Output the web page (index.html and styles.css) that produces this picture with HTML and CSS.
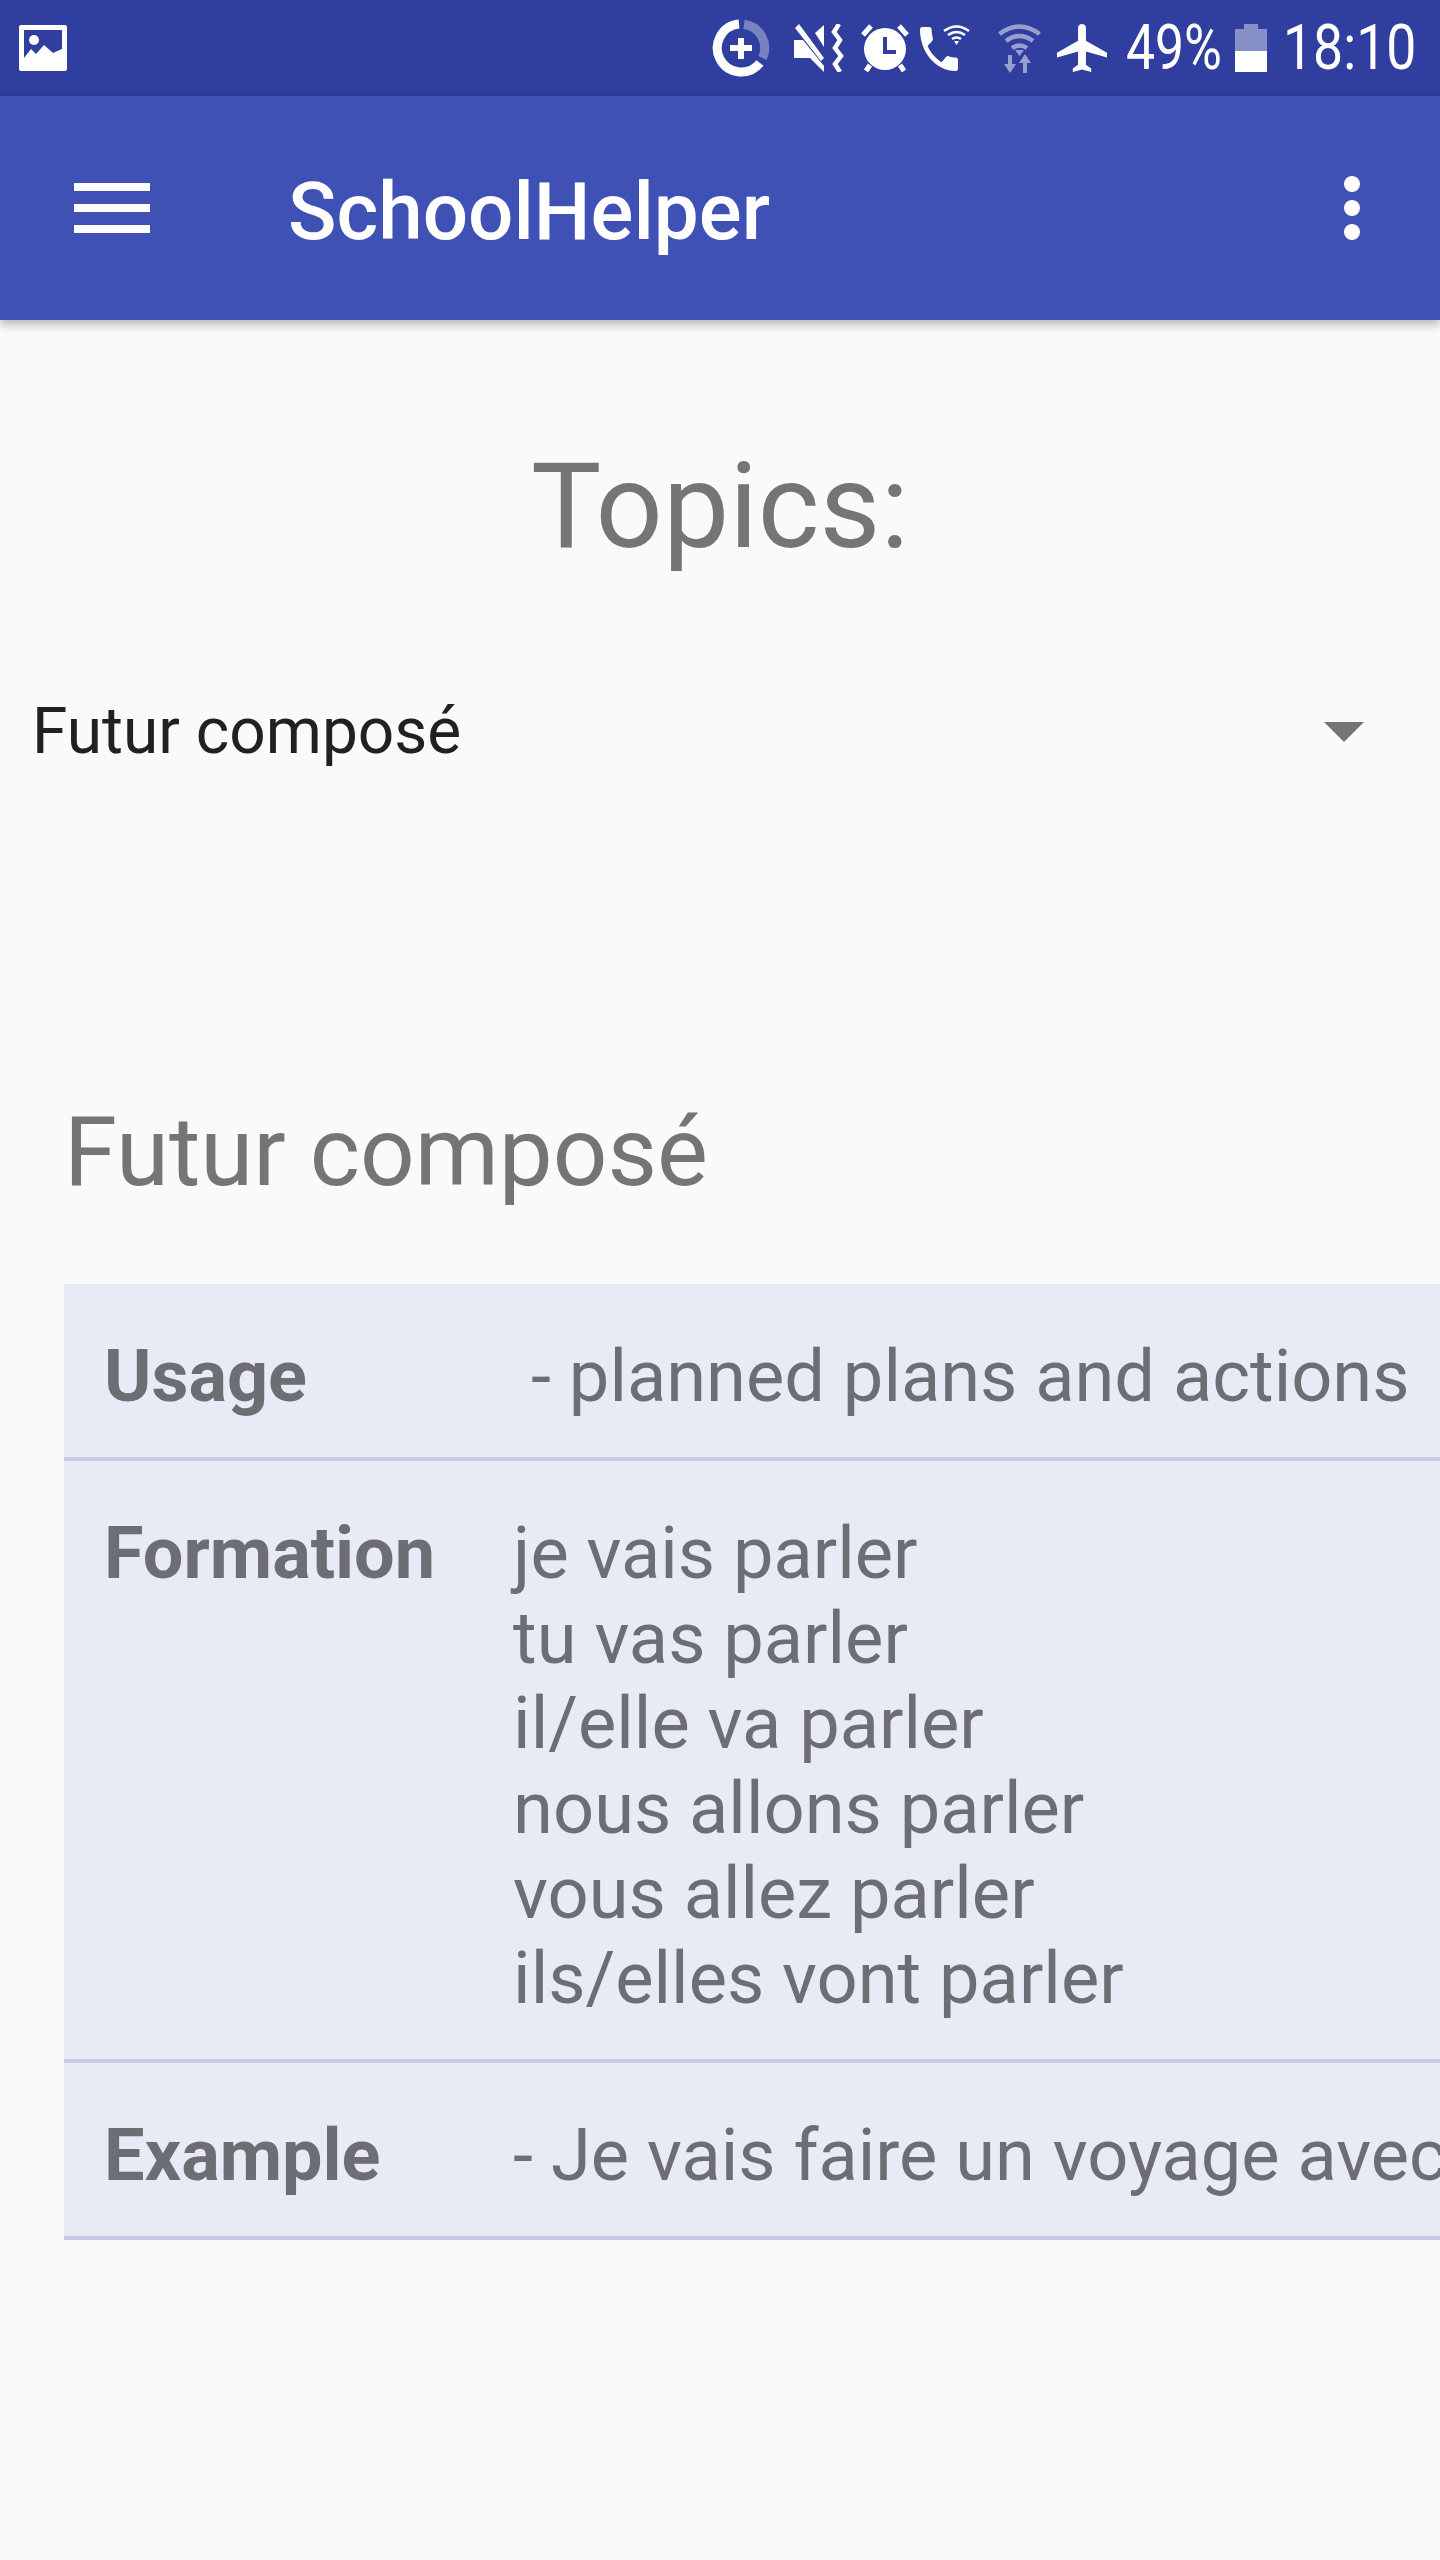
FILE: index.html
```html
<!DOCTYPE html>
<html>
    <head>
        <meta charset="utf-8" />
        <title>SchoolHelper</title>
        <link rel="stylesheet" href="styles.css">
    </head>
    <body>
        <div class="status-bar">
            <svg class="ic-image" width="48" height="46" viewBox="0 0 48 46">
                <path fill="#fff" fill-rule="evenodd" d="M2 0h44a2 2 0 0 1 2 2v42a2 2 0 0 1-2 2H2a2 2 0 0 1-2-2V2a2 2 0 0 1 2-2zM5 5v28l7-9 5 5 8-9 9 8 9-4V5z"/>
                <ellipse fill="#fff" cx="15" cy="15" rx="5" ry="5"/>
            </svg>
            <div class="status-right">
                <svg class="ic-saver" width="58" height="58" viewBox="0 0 58 58">
                    <path fill="none" stroke="#fff" stroke-width="9" d="M27 5.100A24 24 0 1 0 48 44"/>
                    <path fill="none" stroke="#fff" stroke-opacity=".35" stroke-width="9" d="M32 5.200A24 24 0 0 1 50.500 39"/>
                    <path fill="none" stroke="#fff" stroke-width="6" d="M29 19v21M18 29h22"/>
                </svg>
                <svg class="ic-mute" width="52" height="48" viewBox="0 0 52 48">
                    <path fill="#fff" d="M0 16h9L30 42v6L16 34H0zM21 9l9-8v22zM1 4l4-4 25 34-3 3z"/>
                    <path fill="none" stroke="#fff" stroke-width="4.500" d="M45 0l-5 8 6 8-5 8 6 8-6 8 5 8"/>
                </svg>
                <svg class="ic-alarm" width="48" height="48" viewBox="0 0 48 48">
                    <circle fill="#fff" cx="24" cy="25" r="21"/>
                    <path fill="none" stroke="#fff" stroke-width="5" d="M10 2L2 11M38 2l8 9M9 41l-4 6M39 41l4 6"/>
                    <path fill="none" stroke="#303f9f" stroke-width="4" d="M24 13v15h11"/>
                </svg>
                <div class="call-group">
                    <svg class="ic-phone" width="38" height="44" viewBox="3 3 18 18" preserveAspectRatio="none">
                        <path fill="#fff" d="M6.620 10.790c1.440 2.830 3.760 5.140 6.590 6.590l2.200-2.200c.27-.27.67-.36 1.020-.24 1.120.37 2.330.57 3.570.57.55 0 1 .45 1 1V20c0 .55-.45 1-1 1-9.390 0-17-7.610-17-17 0-.55.45-1 1-1h3.500c.55 0 1 .45 1 1 0 1.250.2 2.450.57 3.570.11.35.03.74-.25 1.020l-2.200 2.200z"/>
                    </svg>
                    <svg class="ic-callwifi" width="27" height="20" viewBox="0 0 27 20">
                        <path fill="none" stroke="#fff" stroke-width="2.500" d="M1 6q12.500-9 25 0M5 10q8.500-6 17 0M9 14q4.500-3 9 0"/>
                        <path fill="#fff" d="M11 16h5l-2.500 4z"/>
                    </svg>
                </div>
                <svg class="ic-wifi" width="43" height="50" viewBox="0 0 43 50" opacity=".5">
                    <path fill="none" stroke="#fff" stroke-width="4.500" d="M1.500 11q20-15 40 0M8 18q13.500-10 27 0M14 25q7.500-5 15 0"/>
                    <path fill="#fff" d="M17 27h9l-4.500 6zM10 32h4v9h4l-6 9-6-9h4zM29 50h-4v-10h-4l6-9 6 9h-4z"/>
                </svg>
                <svg class="ic-plane" width="50" height="48" viewBox="2 2 19 20" preserveAspectRatio="none">
                    <path fill="#fff" d="M21 16v-2l-8-5V3.500c0-.83-.67-1.500-1.500-1.500S10 2.670 10 3.500V9l-8 5v2l8-2.500V19l-2 1.500V22l3.500-1 3.500 1v-1.500L13 19v-5.500l8 2.500z"/>
                </svg>
                <span class="status-text pct">49%</span>
                <div class="battery">
                    <div class="battery-cap"></div>
                    <div class="battery-empty"></div>
                    <div class="battery-full"></div>
                </div>
                <span class="status-text clock">18:10</span>
            </div>
        </div>
        <div class="toolbar">
            <div class="burger"><i></i><i></i><i></i></div>
            <div class="app-title">SchoolHelper</div>
            <div class="more"><i></i><i></i><i></i></div>
        </div>
        <div class="content">
            <h1 class="topics">Topics:</h1>
            <div class="spinner">
                <span>Futur composé</span>
                <div class="arrow"></div>
            </div>
            <h2 class="topic-title">Futur composé</h2>
            <table class="grammar">
                <tr>
                    <th>Usage</th>
                    <td>&nbsp;- planned plans and actions</td>
                </tr>
                <tr>
                    <th>Formation</th>
                    <td>je vais parler<br>tu vas parler<br>il/elle va parler<br>nous allons parler<br>vous allez parler<br>ils/elles vont parler</td>
                </tr>
                <tr>
                    <th>Example</th>
                    <td>- Je vais faire un voyage avec</td>
                </tr>
            </table>
        </div>
    </body>
</html>
```

FILE: styles.css
```css
html, body {
    margin: 0;
    padding: 0;
    height: 2560px;
    overflow: hidden;
    background: #fafafa;
    font-family: Roboto, sans-serif;
}

.status-bar {
    height: 96px;
    background: #303f9f;
    display: flex;
    align-items: center;
    justify-content: space-between;
    padding: 0 26px 0 19px;
}
.status-right {
    display: flex;
    align-items: center;
}
.status-right svg {
    display: block;
}
.ic-mute { margin-left: 24px; }
.ic-alarm { margin-left: 15px; }
.call-group {
    margin-left: 11px;
    width: 50px;
    height: 46px;
    display: flex;
    position: relative;
}
.ic-phone { margin-top: 2px; }
.ic-callwifi {
    position: absolute;
    left: 23px;
    top: 0;
}
.ic-wifi { margin-left: 28px; }
.ic-plane { margin-left: 16px; }
.status-text {
    color: #fff;
    font-size: 63px;
    line-height: 72px;
    transform-origin: left center;
}
.pct {
    margin-left: 19px;
    width: 94px;
    transform: scaleX(.82);
}
.clock {
    margin-left: 16px;
    width: 131px;
    transform: scaleX(.85);
}
.battery {
    margin-left: 15px;
    width: 32px;
    display: flex;
    flex-direction: column;
    align-items: center;
}
.battery-cap {
    width: 14px;
    height: 5px;
    background: #8890c8;
}
.battery-empty {
    width: 100%;
    height: 22px;
    background: #8890c8;
}
.battery-full {
    width: 100%;
    height: 21px;
    background: #fff;
}

.toolbar {
    height: 224px;
    background: #3f51b5;
    box-shadow: 0 4px 10px rgba(0, 0, 0, .3);
    display: flex;
    align-items: center;
    position: relative;
}
.burger {
    margin-left: 74px;
    width: 76px;
    display: flex;
    flex-direction: column;
    gap: 13px;
}
.burger i {
    display: block;
    height: 8px;
    background: #fff;
}
.app-title {
    margin-left: 138px;
    padding-top: 8px;
    flex: 1;
    color: #fff;
    font-size: 80px;
    font-weight: 500;
}
.more {
    margin-right: 80px;
    display: flex;
    flex-direction: column;
    gap: 8px;
}
.more i {
    display: block;
    width: 16px;
    height: 16px;
    border-radius: 50%;
    background: #fff;
}

.topics {
    margin: 0;
    padding-top: 117px;
    text-align: center;
    font-size: 118px;
    font-weight: 400;
    line-height: 140px;
    color: #757575;
}
.spinner {
    margin-top: 117px;
    padding: 0 76px 0 32px;
    display: flex;
    align-items: center;
    justify-content: space-between;
    font-size: 64px;
    line-height: 76px;
    color: #212121;
}
.arrow {
    width: 0;
    height: 0;
    border-left: 20px solid transparent;
    border-right: 20px solid transparent;
    border-top: 20px solid #757575;
}
.topic-title {
    margin: 0;
    padding: 326px 0 0 64px;
    font-size: 96px;
    font-weight: 400;
    line-height: 112px;
    color: #757575;
}
.grammar {
    margin: 76px 0 0 64px;
    border-collapse: collapse;
    background: #e8eaf6;
    font-size: 72px;
    line-height: 85px;
    color: #6d6e73;
    white-space: nowrap;
}
.grammar tr {
    border-bottom: 4px solid #c5cae9;
}
.grammar th, .grammar td {
    padding: 50px 40px 38px;
    text-align: left;
    vertical-align: top;
}
.grammar th {
    font-weight: 700;
    padding-right: 38px;
}
.grammar td {
    font-size: 72.2px;
    font-weight: 400;
}
```
